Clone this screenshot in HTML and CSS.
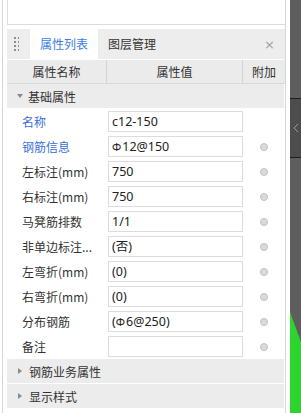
FILE: index.html
```html
<!DOCTYPE html>
<html lang="zh-CN">
<head>
    <meta charset="UTF-8">
    <meta name="viewport" content="width=device-width, initial-scale=1.0">
    <title>属性列表</title>
    <link rel="stylesheet" href="styles.css">
</head>
<body>
    <div class="screen">
        <div class="main">
            <div class="frame">
                <div class="top"></div>
                <div class="panel">
                    <div class="tabs">
                        <span class="grip"></span>
                        <span class="tab active">属性列表</span>
                        <span class="tab">图层管理</span>
                        <span class="close">×</span>
                    </div>
                    <div class="head">
                        <div class="hcell">属性名称</div>
                        <div class="hcell">属性值</div>
                        <div class="hcell">附加</div>
                    </div>
                    <div class="group open"><span class="tri"></span>基础属性</div>

                    <div class="row">
                        <span class="name link">名称</span>
                        <span class="val">c12-150</span>
                        <span class="extra"></span>
                    </div>
                    <div class="row">
                        <span class="name link">钢筋信息</span>
                        <span class="val"><span class="bar">Φ</span>12@150</span>
                        <span class="extra"><i class="dot"></i></span>
                    </div>
                    <div class="row">
                        <span class="name">左标注(mm)</span>
                        <span class="val">750</span>
                        <span class="extra"><i class="dot"></i></span>
                    </div>
                    <div class="row">
                        <span class="name">右标注(mm)</span>
                        <span class="val">750</span>
                        <span class="extra"><i class="dot"></i></span>
                    </div>
                    <div class="row">
                        <span class="name">马凳筋排数</span>
                        <span class="val">1/1</span>
                        <span class="extra"><i class="dot"></i></span>
                    </div>
                    <div class="row">
                        <span class="name">非单边标注...</span>
                        <span class="val">(否)</span>
                        <span class="extra"><i class="dot"></i></span>
                    </div>
                    <div class="row">
                        <span class="name">左弯折(mm)</span>
                        <span class="val">(0)</span>
                        <span class="extra"><i class="dot"></i></span>
                    </div>
                    <div class="row">
                        <span class="name">右弯折(mm)</span>
                        <span class="val">(0)</span>
                        <span class="extra"><i class="dot"></i></span>
                    </div>
                    <div class="row">
                        <span class="name">分布钢筋</span>
                        <span class="val">(<span class="bar">Φ</span>6@250)</span>
                        <span class="extra"><i class="dot"></i></span>
                    </div>
                    <div class="row">
                        <span class="name">备注</span>
                        <span class="val"></span>
                        <span class="extra"><i class="dot"></i></span>
                    </div>

                    <div class="group"><span class="tri"></span>钢筋业务属性</div>
                    <div class="group"><span class="tri"></span>显示样式</div>
                </div>
            </div>
        </div>
        <div class="side">
            <div class="handle">
                <svg width="6" height="10" viewBox="0 0 6 10"><path d="M5 1 L1 5 L5 9" fill="none" stroke="#9a9a9a" stroke-width="1"/></svg>
            </div>
            <div class="green"></div>
        </div>
    </div>
</body>
</html>
```

FILE: styles.css
```css
body {
    margin: 0;
    background: white;
    font-family: "Noto Sans CJK SC", "Noto Sans", sans-serif;
    font-size: 12px;
    color: #333;
}
.screen {
    display: flex;
    width: 301px;
    height: 413px;
    overflow: hidden;
}
.main {
    width: 290px;
    padding-left: 2px;
    box-sizing: border-box;
    background: white;
}
.frame {
    width: 284px;
    height: 100%;
    box-sizing: border-box;
    border-left: 1px solid #d6d6d6;
    border-right: 1px solid #d6d6d6;
}
.top {
    height: 25px;
    margin-left: 4px;
    box-sizing: border-box;
    border-left: 1px solid #dcdcdc;
    border-bottom: 1px solid #dcdcdc;
}
.panel {
    margin-left: 4px;
    margin-top: 4px;
    width: 278px;
}
.tabs {
    display: flex;
    align-items: center;
    height: 30px;
    background: #ededed;
}
.grip {
    width: 6px;
    height: 16px;
    margin-left: 6px;
    margin-right: 11px;
    background-image: radial-gradient(circle, #8c8c8c 1px, transparent 1.1px);
    background-size: 4px 4px;
}
.tab {
    padding: 0 10px;
    line-height: 30px;
    font-size: 12px;
    color: #333;
}
.tab.active {
    background: white;
    color: #3a7ee6;
}
.close {
    margin-left: auto;
    margin-right: 10px;
    font-family: "DejaVu Sans", sans-serif;
    font-size: 13px;
    color: #a0a0a0;
}
.head {
    display: grid;
    grid-template-columns: 100px 136px 42px;
    margin-top: 1px;
    height: 24px;
    box-sizing: border-box;
    background: #ebebeb;
    border-bottom: 1px solid #d9d9d9;
}
.hcell {
    text-align: center;
    line-height: 23px;
    border-right: 1px solid #d3d3d3;
    color: #333;
}
.hcell:first-child {
    text-align: center;
}
.hcell:last-child {
    border-right: none;
}
.group {
    display: flex;
    align-items: center;
    height: 24px;
    margin-bottom: 1px;
    margin-right: 1px;
    background: #ececec;
    padding-left: 10px;
    color: #333;
}
.tri {
    width: 0;
    height: 0;
    margin-right: 7px;
    border-top: 3px solid transparent;
    border-bottom: 3px solid transparent;
    border-left: 4px solid #8a8a8a;
    margin-left: 1px;
}
.group.open .tri {
    border-left: 3px solid transparent;
    border-right: 3px solid transparent;
    border-top: 4px solid #8a8a8a;
    border-bottom: none;
    margin-left: 0;
    margin-right: 5px;
}
.row {
    display: grid;
    grid-template-columns: 100px 136px 42px;
    align-items: center;
    height: 25px;
}
.name {
    padding-left: 15px;
    white-space: nowrap;
    overflow: hidden;
}
.name.link {
    color: #3a6fdc;
}
.val {
    height: 21px;
    margin-left: 1px;
    margin-right: 0;
    box-sizing: border-box;
    border: 1px solid #dcdcdc;
    padding-left: 3px;
    font-family: "Noto Sans", "Noto Sans CJK SC", sans-serif;
    font-size: 12.5px;
    line-height: 19px;
    color: #222;
    white-space: nowrap;
}
.bar {
    font-size: 11px;
    margin-right: 1px;
}
.extra {
    display: flex;
    justify-content: center;
}
.dot {
    width: 8px;
    height: 8px;
    box-sizing: border-box;
    border-radius: 50%;
    background: #dadada;
    border: 1px solid #c2c2c2;
    margin-left: 0;
}
.side {
    display: flex;
    flex-direction: column;
    width: 11px;
    background: #5e5e5e;
}
.handle {
    display: flex;
    align-items: center;
    justify-content: center;
    margin-top: 98px;
    height: 60px;
    box-sizing: border-box;
    background: #4d4d4d;
    border-top: 1px solid #1e1e1e;
    border-bottom: 1px solid #1e1e1e;
}
.green {
    margin-top: auto;
    height: 101px;
    background: #2dd42d;
    clip-path: polygon(0 0, 100% 30px, 100% 100%, 0 100%);
}
```
